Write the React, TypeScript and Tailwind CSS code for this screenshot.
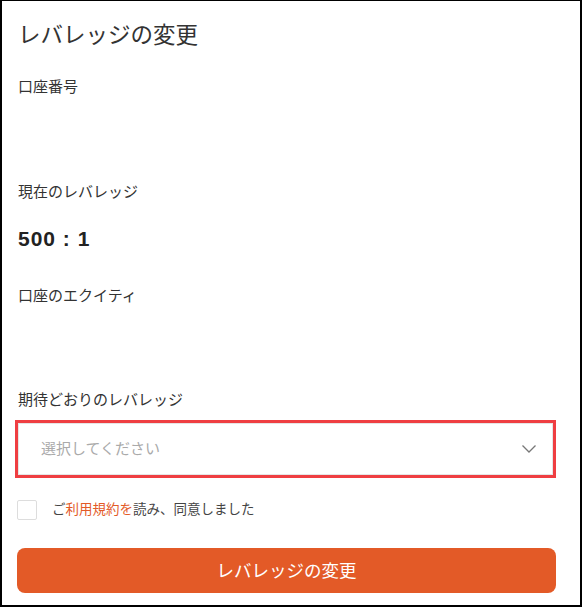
import { useState } from 'react'

const font = { fontFamily: '"Liberation Sans", "Noto Sans CJK JP", sans-serif' }

function Field({ label, children }: { label: string; children?: React.ReactNode }) {
  return (
    <div>
      <div className="text-[15px] leading-[24px] text-[#333]">{label}</div>
      {children}
    </div>
  )
}

export default function App() {
  const [agreed, setAgreed] = useState(false)
  const [leverage, setLeverage] = useState('')

  return (
    <div className="w-[582px] h-[607px] bg-white" style={font}>
      <div className="h-full border-x-2 border-b-2 border-t border-black pl-[15px] pr-[24px] pt-[18px]">
        <h1 className="pl-[1px] text-[22.5px] leading-[33px] text-[#333] font-normal">レバレッジの変更</h1>

        <div className="mt-[23px] h-[105px] pl-[1px]">
          <Field label="口座番号" />
        </div>

        <div className="pl-[1px]">
          <Field label="現在のレバレッジ">
            <div className="mt-[20px] text-[21px] leading-[30px] font-bold tracking-[1px] text-[#222]">500 : 1</div>
          </Field>
        </div>

        <div className="mt-[30px] h-[104px] pl-[1px]">
          <Field label="口座のエクイティ" />
        </div>

        <div className="pl-[1px]">
          <Field label="期待どおりのレバレッジ" />
        </div>

        <div className="mt-[8px] -ml-[2px] border-[3px] border-[#ef3e42] h-[58px]">
          <button
            onClick={() => setLeverage('')}
            className="w-full h-full flex items-center justify-between border border-[#e5e5e5] pl-[22px] pr-[15px] bg-white"
          >
            <span className="text-[15px] text-[#aaa]">{leverage || '選択してください'}</span>
            <svg width="16" height="10" viewBox="0 0 16 10" fill="none" stroke="#777" strokeWidth="1.3">
              <polyline points="1.5,1.5 8,8 14.5,1.5" />
            </svg>
          </button>
        </div>

        <label className="mt-[22px] flex items-center gap-[15px] cursor-pointer">
          <span
            onClick={() => setAgreed(!agreed)}
            className={`w-[20px] h-[20px] rounded-[2px] border ${agreed ? 'bg-[#e35a27] border-[#e35a27]' : 'border-[#ddd] bg-white'}`}
          />
          <span className="text-[13.5px] text-[#444]">
            ご<span className="text-[#e35a27]">利用規約を</span>読み、同意しました
          </span>
        </label>

        <button className="mt-[28px] w-full h-[45px] rounded-[8px] bg-[#e35a27] text-white text-[17.5px]">
          レバレッジの変更
        </button>
      </div>
    </div>
  )
}
